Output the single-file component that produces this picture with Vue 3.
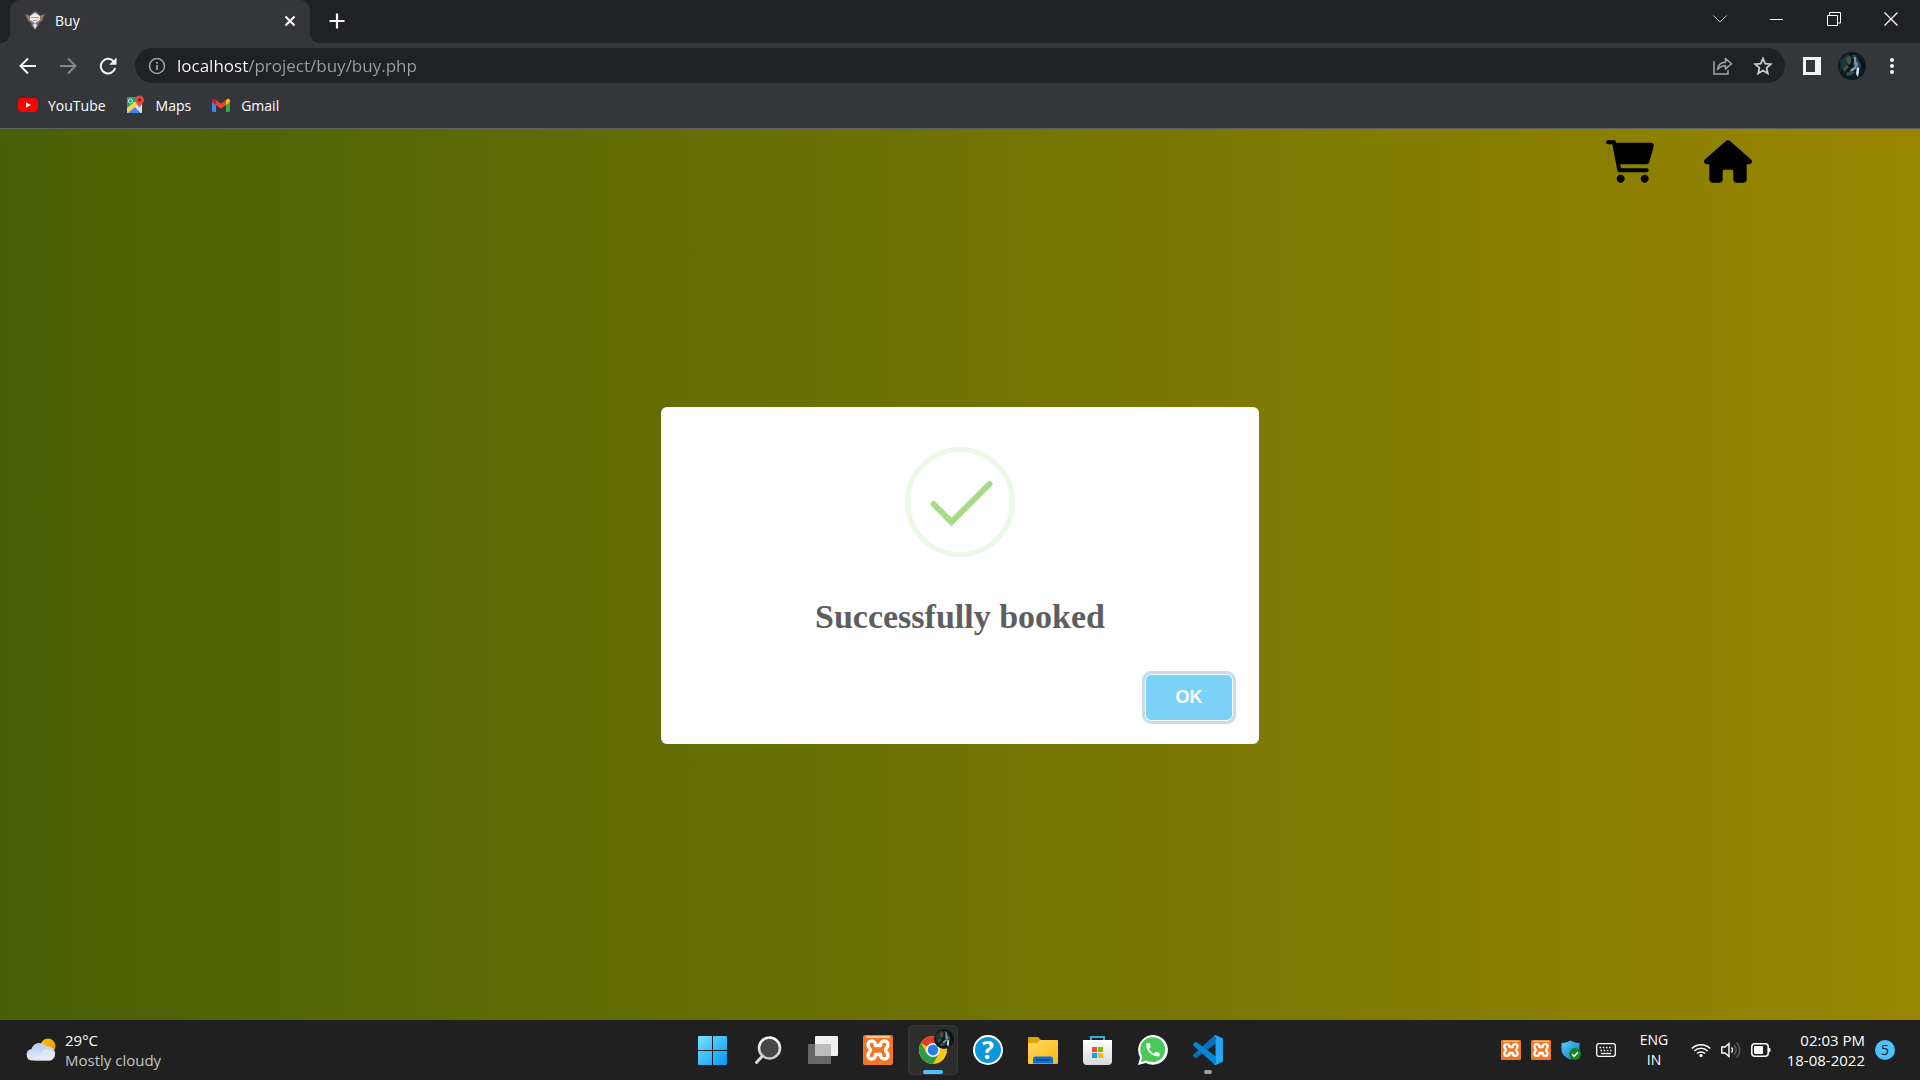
<script setup>
import { ref } from 'vue'

const address = ref('localhost/project/buy/buy.php')
const dialogOpen = ref(true)
</script>

<template>
  <div class="screen">
    <svg class="defs" aria-hidden="true">
      <defs>
        <linearGradient id="winBlue" x1="0" y1="0" x2="1" y2="1">
          <stop offset="0" stop-color="#7fe0ff" />
          <stop offset="0.5" stop-color="#3cbcf8" />
          <stop offset="1" stop-color="#0a94f5" />
        </linearGradient>
        <linearGradient id="folderYellow" x1="0" y1="0" x2="1" y2="1">
          <stop offset="0" stop-color="#ffd968" />
          <stop offset="1" stop-color="#f9b80e" />
        </linearGradient>
        <linearGradient id="paper" x1="0" y1="0" x2="0" y2="1">
          <stop offset="0" stop-color="#ffffff" />
          <stop offset="1" stop-color="#d9d9d9" />
        </linearGradient>
        <linearGradient id="cloud" x1="0" y1="0" x2="0" y2="1">
          <stop offset="0" stop-color="#b4cbef" />
          <stop offset="1" stop-color="#e8eef8" />
        </linearGradient>
        <linearGradient id="sun" x1="0" y1="0" x2="1" y2="1">
          <stop offset="0" stop-color="#ffc400" />
          <stop offset="1" stop-color="#f98a00" />
        </linearGradient>
        <linearGradient id="shieldBlue" x1="0" y1="0" x2="1" y2="1">
          <stop offset="0" stop-color="#5bd0f5" />
          <stop offset="1" stop-color="#0f72cc" />
        </linearGradient>
        <linearGradient id="rim" x1="0" y1="0" x2="0" y2="1">
          <stop offset="0" stop-color="#ffffff" />
          <stop offset="1" stop-color="#c4cad0" />
        </linearGradient>
        <symbol id="xampp" viewBox="0 0 30 30">
          <rect width="30" height="30" rx="2" fill="#f37623" />
          <rect x="3" y="1" width="24" height="2" rx="1" fill="#ffc59a" />
          <path
            d="M12.500 10.500C13 5 5 4.500 5 9.500C5 13 7.500 13 7.500 15C7.500 17 5 17 5 20.500C5 25.500 13 25 12.500 19.500H17.500C17 25 25 25.500 25 20.500C25 17 22.500 17 22.500 15C22.500 13 25 13 25 9.500C25 4.500 17 5 17.500 10.500Z"
            fill="none" stroke="#fff" stroke-width="3.400" stroke-linejoin="round"
          />
        </symbol>
        <symbol id="portrait" viewBox="0 0 28 28">
          <clipPath id="round"><circle cx="14" cy="14" r="14" /></clipPath>
          <g clip-path="url(#round)">
            <rect width="28" height="28" fill="#0d1a20" />
            <path d="M2 8L10 2L15 6L9 13L3 18z" fill="#1a3535" />
            <path d="M8 6l4-2 1 3-4 4zM5 16l4-3 2 2-5 5zM10 9l3-1 0 3-3 2z" fill="#46553f" />
            <path d="M14 3l4 0 2 5 3 4-1 6-4 0-3-5 1-5z" fill="#29465f" />
            <path d="M16 5l2 0 0 4 2 3-1 3-2-1-1-4z" fill="#7e97a8" />
            <path d="M19 15l2 1 0 4-1 5-2-3z" fill="#d7e3ea" />
            <path d="M13 17l5-3 0 2-3 3-4 2z" fill="#8ba2ae" />
            <path d="M8 21l5-2 4 1-3 3-5 1z" fill="#2f4b55" />
            <path d="M21 5l5 5 1 8-3-2z" fill="#101012" />
          </g>
        </symbol>
      </defs>
    </svg>

    <header class="browser">
      <div class="tab-strip">
        <div class="tab">
          <svg class="favicon" width="20" height="20" viewBox="0 0 20 20">
            <path d="M0 3l6 2-1 3 2 4-4-2-1-3z" fill="#9c7560" />
            <path d="M20 3l-6 2 1 3-2 4 4-2 1-3z" fill="#9c7560" />
            <path d="M10 0l4 3 1 6-2 6-3 4-3-4-2-6 1-6z" fill="#7b7480" />
            <path d="M5 5l5-3 5 3v4l-5 3-5-3z" fill="#f2eeee" />
            <path d="M10 12l2 2-2 4-2-4z" fill="#e6dfe4" />
            <path d="M6 6.500h8M8 9.500h4" stroke="#999" fill="none" />
          </svg>
          <span class="tab-title">Buy</span>
          <button class="plain close-tab" aria-label="Close tab">
            <svg width="12" height="12" viewBox="0 0 12 12"><path d="M1.500 1.500l9 9M10.500 1.500l-9 9" stroke="#fff" stroke-width="2" /></svg>
          </button>
        </div>
        <button class="plain new-tab" aria-label="New tab">
          <svg width="16" height="16" viewBox="0 0 16 16"><path d="M8 0.500v15M0.500 8h15" stroke="#fff" stroke-width="2.200" /></svg>
        </button>
        <div class="window-controls">
          <button class="plain" aria-label="Search tabs">
            <svg width="14" height="14" viewBox="0 0 14 14"><path d="M0.500 3.500l6.500 6.500 6.500-6.500" fill="none" stroke="#ccc" /></svg>
          </button>
          <button class="plain" aria-label="Minimize">
            <svg width="14" height="14" viewBox="0 0 14 14"><path d="M0 7.500h13" stroke="#fff" /></svg>
          </button>
          <button class="plain" aria-label="Restore">
            <svg width="14" height="14" viewBox="0 0 14 14"><path d="M0.500 3.500h10v10h-10zM2.500 3v-2.500h11v10.500h-2.500" fill="none" stroke="#fff" /></svg>
          </button>
          <button class="plain" aria-label="Close">
            <svg width="14" height="14" viewBox="0 0 14 14"><path d="M0.500 0.500l13 13M13.500 0.500l-13 13" stroke="#fff" stroke-width="1.200" /></svg>
          </button>
        </div>
      </div>

      <div class="toolbar">
        <button class="plain tool" aria-label="Back">
          <svg width="18" height="18" viewBox="0 0 18 18"><path d="M17 9H2M9 1.500L1.500 9L9 16.500" fill="none" stroke="#f1f3f4" stroke-width="2" /></svg>
        </button>
        <button class="plain tool" aria-label="Forward">
          <svg width="18" height="18" viewBox="0 0 18 18"><path d="M1 9H16M9 1.500L16.500 9L9 16.500" fill="none" stroke="#85878a" stroke-width="2" /></svg>
        </button>
        <button class="plain tool" aria-label="Reload">
          <svg width="18" height="18" viewBox="0 0 18 18">
            <path d="M14.500 4.200A7.300 7.300 0 1 0 16.200 11" fill="none" stroke="#f1f3f4" stroke-width="2" />
            <path d="M17.500 0.500V7.800H10.200z" fill="#f1f3f4" />
          </svg>
        </button>
        <div class="omnibox">
          <svg width="18" height="18" viewBox="0 0 18 18">
            <circle cx="9" cy="9" r="7.500" fill="none" stroke="#9aa0a6" stroke-width="1.600" />
            <path d="M9 8v5M9 5v1.800" stroke="#9aa0a6" stroke-width="1.800" />
          </svg>
          <input v-model="address" class="address" type="text" aria-label="Address" spellcheck="false" />
          <button class="plain tool" aria-label="Share">
            <svg width="20" height="18" viewBox="0 0 20 18">
              <path d="M1 4V17H15V13" fill="none" stroke="#a3a5a8" stroke-width="1.500" />
              <path d="M4.500 12.500C5 8 8 5.500 12.500 5.300V1.500L18.500 6.800L12.500 12V8.800C9 8.800 6.500 10 4.500 12.500z" fill="none" stroke="#a3a5a8" stroke-width="1.500" stroke-linejoin="round" />
            </svg>
          </button>
          <button class="plain tool" aria-label="Bookmark this page">
            <svg width="20" height="20" viewBox="0 0 20 20"><path d="M10 2.500l2.200 5.200 5.600.500-4.200 3.700 1.200 5.500-4.800-2.900-4.800 2.900 1.200-5.500L2.200 8.200l5.600-.500z" fill="none" stroke="#c9cbcd" stroke-width="1.800" /></svg>
          </button>
        </div>
        <div class="toolbar-end">
          <button class="plain tool" aria-label="Side panel">
            <svg width="18" height="18" viewBox="0 0 18 18"><path fill-rule="evenodd" d="M0 0h18v18H0zM3 3v12h9V3z" fill="#f1f3f4" /></svg>
          </button>
          <button class="plain tool" aria-label="Profile">
            <svg width="28" height="28"><use href="#portrait" /></svg>
          </button>
          <button class="plain tool" aria-label="Menu">
            <svg width="4" height="16" viewBox="0 0 4 16"><circle cx="2" cy="2" r="2" fill="#f1f3f4" /><circle cx="2" cy="8" r="2" fill="#f1f3f4" /><circle cx="2" cy="14" r="2" fill="#f1f3f4" /></svg>
          </button>
        </div>
      </div>

      <nav class="bookmarks" aria-label="Bookmarks">
        <a href="#youtube">
          <svg width="20" height="20" viewBox="0 0 20 20"><rect y="3" width="20" height="14" rx="4" fill="#f00" /><path d="M8 7.200v5.600L13 10z" fill="#fff" /></svg>
          YouTube
        </a>
        <a href="#maps">
          <svg width="20" height="20" viewBox="0 0 20 20">
            <path d="M1 2h12l3 8v8H1z" fill="#e8e8e8" />
            <path d="M1 2h11v5L1 16z" fill="#1fa463" />
            <path d="M1 13L12 4l2 3L2 18H1z" fill="#fdd045" />
            <path d="M2 18l7-6 6 6z" fill="#4285f4" />
            <path d="M9 12l4-4 3 5v5h-1z" fill="#dcdcdc" />
            <circle cx="4.500" cy="6" r="2" fill="none" stroke="#d7f2e3" />
            <path d="M13.500 0.500a4.500 4.500 0 0 1 4.500 4.500c0 3-3.500 4.500-4.500 8-1-3.500-4.500-5-4.500-8a4.500 4.500 0 0 1 4.500-4.500z" fill="#dd4b3e" />
            <circle cx="13.500" cy="4.800" r="1.600" fill="#7c2019" />
          </svg>
          Maps
        </a>
        <a href="#gmail">
          <svg width="20" height="20" viewBox="-1 0 20 20">
            <path d="M0 6l4 3v8H1.200A1.200 1.200 0 0 1 0 15.800z" fill="#4285f4" />
            <path d="M18 6l-4 3v8h2.800a1.200 1.200 0 0 0 1.200-1.200z" fill="#34a853" />
            <path d="M14 5l1.200-1A1.800 1.800 0 0 1 18 5.500V7l-4 3z" fill="#fbbc04" />
            <path d="M0 7V5.500A1.800 1.800 0 0 1 2.800 4L4 5v5z" fill="#c5221f" />
            <path d="M4 5l5 3.800L14 5v5l-5 3.800L4 10z" fill="#ea4335" />
          </svg>
          Gmail
        </a>
      </nav>
    </header>

    <main class="page">
      <nav class="page-nav" aria-label="Shop">
        <a href="#cart" aria-label="Cart">
          <svg width="48" height="43" viewBox="0 0 576 512"><path d="M96 0C107.500 0 117.400 8.190 119.600 19.510L121.100 32H541.800C562.100 32 578.300 52.250 572.600 72.660L518.600 264.700C514.700 278.500 502.100 288 487.800 288H170.700L179.900 336H488C501.300 336 512 346.700 512 360C512 373.300 501.300 384 488 384H159.100C148.500 384 138.600 375.800 136.400 364.500L76.140 48H24C10.750 48 0 37.250 0 24C0 10.750 10.750 0 24 0H96zM128 464C128 437.500 149.500 416 176 416C202.500 416 224 437.500 224 464C224 490.500 202.500 512 176 512C149.500 512 128 490.500 128 464zM512 464C512 490.500 490.500 512 464 512C437.500 512 416 490.500 416 464C416 437.500 437.500 416 464 416C490.500 416 512 437.500 512 464z" /></svg>
        </a>
        <a href="#home" aria-label="Home">
          <svg width="48" height="43" viewBox="0 0 576 512"><path d="M575.800 255.500C575.800 273.500 560.800 287.600 543.800 287.600H511.800L512.500 447.700C512.500 450.500 512.300 453.100 512 455.800V472C512 494.100 494.100 512 472 512H392C369.900 512 352 494.100 352 472V384C352 366.300 346 356 338 356H238C230 356 224 366.300 224 384V472C224 494.100 206.100 512 184 512H104C81.910 512 64 494.100 64 472V287.600H32.050C14.020 287.600 0 273.500 0 255.500C0 246.500 3.004 238.500 10.010 231.500L266.400 8.016C273.400 1.002 281.400 0 288.400 0C295.400 0 303.400 2.004 309.500 7.014L564.800 231.500C572.800 238.500 576.900 246.500 575.800 255.500z" /></svg>
        </a>
      </nav>

      <section v-if="dialogOpen" class="dialog" role="dialog" aria-labelledby="dialog-title">
        <svg class="success" width="110" height="110" viewBox="0 0 110 110">
          <circle cx="55" cy="55" r="52.500" fill="none" stroke="#edf8e7" stroke-width="5" />
          <path d="M28.500 57L46.500 75L84.500 37" fill="none" stroke="#a5dc86" stroke-width="6" stroke-linecap="round" />
        </svg>
        <h1 id="dialog-title">Successfully booked</h1>
        <div class="dialog-footer">
          <button class="ok" @click="dialogOpen = false">OK</button>
        </div>
      </section>
    </main>

    <footer class="taskbar">
      <div class="weather">
        <svg width="30" height="24" viewBox="0 0 30 24">
          <circle cx="22" cy="8" r="7.500" fill="url(#sun)" />
          <path d="M6 22.500a5.800 5.800 0 0 1-.500-11.500A8.500 8.500 0 0 1 20.500 8.500A6.500 6.500 0 0 1 23.500 22.500z" fill="url(#cloud)" />
          <path d="M8 22.500h15.500a5 5 0 0 0 0-10.500c-5-1.500-8 2-9 4z" fill="#e4ebf7" opacity="0.700" />
        </svg>
        <div>
          <div class="temp">29°C</div>
          <div class="sky">Mostly cloudy</div>
        </div>
      </div>

      <nav class="apps" aria-label="Pinned apps">
        <button class="plain app" aria-label="Start">
          <svg viewBox="0 0 50 50"><path d="M11 11h13v14h-14v-13q0-1 1-1zM25 11h13q1 0 1 1v13h-14zM10 26h14v14h-13q-1 0-1-1zM25 26h14v13q0 1-1 1h-13z" fill="url(#winBlue)" /></svg>
        </button>
        <button class="plain app" aria-label="Search">
          <svg viewBox="0 0 50 50">
            <path d="M19 31.500L13.500 37.500" stroke="#d4d8dc" stroke-width="3" stroke-linecap="round" />
            <circle cx="26.500" cy="23" r="10.500" fill="#474747" stroke="url(#rim)" stroke-width="2.500" />
          </svg>
        </button>
        <button class="plain app" aria-label="Task view">
          <svg viewBox="0 0 50 50">
            <rect x="10" y="19" width="23" height="20" rx="1" fill="#676767" />
            <rect x="17" y="11" width="23" height="20" rx="1" fill="#f0f0f0" />
            <path d="M17 19h16v12H17z" fill="#bdbdbd" />
          </svg>
        </button>
        <button class="plain app" aria-label="XAMPP">
          <svg viewBox="0 0 50 50"><use href="#xampp" x="10" y="10" width="30" height="30" /></svg>
        </button>
        <button class="plain app active" aria-label="Chrome">
          <svg viewBox="0 0 50 50">
            <circle cx="25" cy="25" r="14" fill="#fcc31e" />
            <path d="M25 25L12.880 18A14 14 0 0 1 37.120 18z" fill="#e33b2e" />
            <path d="M12.880 18A14 14 0 0 0 25 39L31 28.500L19 28.500z" fill="#2a9e47" />
            <circle cx="25" cy="25" r="7" fill="#fff" />
            <circle cx="25" cy="25" r="5.400" fill="#2b7de9" />
            <use href="#portrait" x="26" y="4" width="20" height="20" />
            <rect x="15" y="45" width="20" height="4" rx="2" fill="#4cc2ff" />
          </svg>
        </button>
        <button class="plain app" aria-label="Help">
          <svg viewBox="0 0 50 50">
            <circle cx="25" cy="25" r="14" fill="#0a97dc" stroke="#fff" stroke-width="2" />
            <text x="25" y="34" class="help-mark" text-anchor="middle">?</text>
          </svg>
        </button>
        <button class="plain app" aria-label="File Explorer">
          <svg viewBox="0 0 50 50">
            <path d="M10 13q0-1 1-1h9l3 3h-1v6H10z" fill="#e3a008" />
            <path d="M10 18h9l3-3h17q1 0 1 1v22q0 1-1 1H11q-1 0-1-1z" fill="url(#folderYellow)" />
            <path d="M15 38.500v-5q0-2 2-2h16q2 0 2 2v5z" fill="#0f6fd0" />
            <path d="M18 35h14" stroke="#07427f" stroke-width="1.200" />
          </svg>
        </button>
        <button class="plain app" aria-label="Microsoft Store">
          <svg viewBox="0 0 50 50">
            <path d="M18 17v-5h13v5" fill="none" stroke="#27b0ee" stroke-width="2" />
            <path d="M10 15h29v21q0 4-4 4H14q-4 0-4-4z" fill="url(#paper)" />
            <path d="M19 22h5v5h-5z" fill="#f25022" /><path d="M25 22h5v5h-5z" fill="#7fba00" />
            <path d="M19 28h5v5h-5z" fill="#00a4ef" /><path d="M25 28h5v5h-5z" fill="#ffb900" />
          </svg>
        </button>
        <button class="plain app" aria-label="WhatsApp">
          <svg viewBox="0 0 50 50">
            <path d="M10 40l2.100-7.600A14.900 14.900 0 1 1 17.800 38z" fill="#fff" />
            <path d="M12.800 37.200l1.700-5.300A12.500 12.500 0 1 1 18.500 35.500z" fill="#4ac959" />
            <path transform="translate(16 16) scale(0.740)" d="M6.620 10.790c1.440 2.830 3.760 5.140 6.590 6.590l2.200-2.200c.270-.270.670-.360 1.020-.240 1.120.370 2.330.570 3.570.570.550 0 1 .450 1 1V20c0 .550-.450 1-1 1-9.390 0-17-7.610-17-17 0-.550.450-1 1-1h3.500c.550 0 1 .450 1 1 0 1.250.200 2.450.570 3.570.110.350.030.740-.250 1.020l-2.200 2.200z" fill="#fff" />
          </svg>
        </button>
        <button class="plain app" aria-label="Visual Studio Code">
          <svg viewBox="0 0 50 50">
            <path d="M32 10L10.300 29.500q-.700 1 0 1.800l1.600 1.400q.900.600 1.800 0L33 18.500z" fill="#0a6fb8" />
            <path d="M10.300 20.500q-.700-1 0-1.800l1.600-1.400q.900-.600 1.800 0L33 31.500L32 40z" fill="#0a85d1" />
            <path d="M32 10.200q.600-.300 1.200 0l6 2.800q.800.400.800 1.300v21.400q0 .900-.800 1.300l-6 2.800q-.600.300-1.200 0l-1.500-1q2 .500 2-1.500V12.700q0-2-2-1.500z" fill="#27a4f2" />
            <rect x="21" y="45" width="8" height="4" rx="2" fill="#9a9a9a" />
          </svg>
        </button>
      </nav>

      <div class="tray">
        <button class="plain tray-item" aria-label="XAMPP Apache"><svg width="20" height="20"><use href="#xampp" /></svg></button>
        <button class="plain tray-item" aria-label="XAMPP MySQL"><svg width="20" height="20"><use href="#xampp" /></svg></button>
        <button class="plain tray-item" aria-label="Windows Security">
          <svg width="20" height="20" viewBox="0 0 20 20">
            <path d="M9.500 0.500C12 2 15 3 18.500 3V9C18.500 14 15 17.500 9.500 19.500C4 17.500 0.500 14 0.500 9V3C4 3 7 2 9.500 0.500z" fill="url(#shieldBlue)" />
            <circle cx="14" cy="14" r="6" fill="#0f8a1d" />
            <path d="M11.200 14.200l2 2 3.600-3.800" fill="none" stroke="#fff" stroke-width="1.600" />
          </svg>
        </button>
        <button class="plain tray-item keyboard" aria-label="Touch keyboard">
          <svg width="20" height="14" viewBox="0 0 20 14">
            <rect x="0.700" y="0.700" width="18.600" height="12.600" rx="2" fill="none" stroke="#fff" stroke-width="1.300" />
            <path d="M3.500 4.500h13M4.500 7.500h11" stroke="#fff" stroke-width="1.500" stroke-dasharray="1.500 1.700" />
            <path d="M5 10.500h10" stroke="#fff" stroke-width="1.300" />
          </svg>
        </button>
        <button class="plain language">ENG<br />IN</button>
        <button class="plain tray-item" aria-label="Network">
          <svg width="20" height="16" viewBox="0 0 20 16" fill="none" stroke="#fff" stroke-width="1.500">
            <path d="M0.800 6.500a13 13 0 0 1 18.400 0M3.400 9a9.500 9.500 0 0 1 13.200 0M6 11.500a5.800 5.800 0 0 1 8 0" />
            <circle cx="10" cy="13.500" r="1.600" fill="#fff" stroke="none" />
          </svg>
        </button>
        <button class="plain tray-item" aria-label="Volume">
          <svg width="20" height="18" viewBox="0 0 20 18" fill="none" stroke="#fff" stroke-width="1.400">
            <path d="M0.800 6H4L8 2.500V15.500L4 12H0.800z" />
            <path d="M10.500 6.500a3.500 3.500 0 0 1 0 5" />
            <path d="M13 4a7 7 0 0 1 0 10M15.500 1.500a10.500 10.500 0 0 1 0 15" stroke="#5c5c5c" />
          </svg>
        </button>
        <button class="plain tray-item" aria-label="Battery">
          <svg width="20" height="14" viewBox="0 0 20 14">
            <rect x="0.800" y="0.800" width="16.400" height="12.400" rx="3" fill="none" stroke="#fff" stroke-width="1.500" />
            <rect x="3" y="3" width="9" height="8" rx="1" fill="#fff" />
            <path d="M17.500 5h1q1 0 1 1v2q0 1-1 1h-1z" fill="#fff" />
          </svg>
        </button>
        <time class="clock" datetime="2022-08-18T14:03">02:03 PM<br />18-08-2022</time>
        <button class="plain badge" aria-label="5 notifications">5</button>
      </div>
    </footer>
  </div>
</template>

<style>
body {
  margin: 0;
}
</style>

<style scoped>
.screen {
  display: flex;
  flex-direction: column;
  min-height: 100vh;
  font-family: "Open Sans", "Noto Sans", sans-serif;
  font-size: 14px;
  color: #fff;
}
.defs {
  position: absolute;
  width: 0;
  height: 0;
}
svg {
  display: block;
  flex: none;
}
.plain {
  display: flex;
  align-items: center;
  justify-content: center;
  padding: 0;
  border: 0;
  background: none;
  color: inherit;
  font: inherit;
}
.browser {
  background: #35363a;
  border-bottom: 1px solid #5f6064;
}
.tab-strip {
  display: flex;
  height: 43px;
  padding: 0 1px 0 10px;
  background: #202124;
}
.tab {
  position: relative;
  display: flex;
  align-items: center;
  box-sizing: border-box;
  width: 300px;
  padding: 0 14px 2px 15px;
  border-radius: 10px 10px 0 0;
  background: #35363a;
}
.tab::before,
.tab::after {
  content: "";
  position: absolute;
  bottom: 0;
  width: 10px;
  height: 10px;
}
.tab::before {
  right: 100%;
  background: radial-gradient(circle at 0 0, #202124 10px, #35363a 10px);
}
.tab::after {
  left: 100%;
  background: radial-gradient(circle at 100% 0, #202124 10px, #35363a 10px);
}
.favicon {
  margin-right: 10px;
}
.close-tab {
  margin-left: auto;
}
.new-tab {
  width: 36px;
  height: 42px;
  margin-left: 9px;
}
.window-controls {
  display: flex;
  height: 37px;
  margin-left: auto;
}
.window-controls .plain {
  width: 57px;
}
.toolbar {
  display: flex;
  align-items: center;
  height: 45px;
  padding: 0 8px;
}
.tool {
  width: 40px;
  height: 35px;
}
.omnibox {
  display: flex;
  flex: 1;
  align-items: center;
  height: 35px;
  margin-left: 7px;
  padding: 0 2px 0 13px;
  border-radius: 18px;
  background: #202124;
}
.address {
  flex: 1;
  min-width: 0;
  height: 30px;
  margin-left: 11px;
  padding: 0;
  border: 0;
  outline: 0;
  font-family: inherit;
  font-size: 17px;
  color: transparent;
  caret-color: #fff;
  background: linear-gradient(to right, #fff 71px, #9aa0a6 71px);
  background-clip: text;
  -webkit-background-clip: text;
}
.toolbar-end {
  display: flex;
  margin-left: 7px;
}
.bookmarks {
  display: flex;
  gap: 20px;
  height: 34px;
  padding: 0 18px 6px;
}
.bookmarks a {
  display: flex;
  align-items: center;
  gap: 10px;
  color: #fff;
  text-decoration: none;
}
.page {
  display: grid;
  flex: 1;
  background: linear-gradient(to right, #476006, #998600);
}
.page-nav,
.dialog {
  grid-area: 1 / 1;
}
.page-nav {
  display: flex;
  align-self: start;
  justify-content: flex-end;
  gap: 50px;
  padding: 11px 168px 0 0;
}
.dialog {
  display: flex;
  flex-direction: column;
  align-items: center;
  place-self: center;
  box-sizing: border-box;
  width: 598px;
  margin-top: 2px;
  padding: 40px 23px 20px;
  border-radius: 6px;
  background: #fff;
}
.dialog h1 {
  margin: 38px 0 32px;
  font-family: "Liberation Serif", "Times New Roman", serif;
  font-size: 34px;
  line-height: 44px;
  color: #5e5e5e;
}
.dialog-footer {
  display: flex;
  justify-content: flex-end;
  width: 100%;
}
.ok {
  width: 94px;
  height: 53px;
  border: 3px solid #c9dcec;
  border-radius: 9px;
  background: #7cd1f9;
  box-shadow: inset 0 0 0 1px #fff;
  color: #fff;
  font-family: "Liberation Sans", Arial, sans-serif;
  font-size: 18px;
  font-weight: 700;
}
.taskbar {
  display: grid;
  grid-template-columns: 1fr auto 1fr;
  align-items: center;
  height: 60px;
  background: #202020;
}
.weather {
  display: flex;
  align-items: center;
  gap: 9px;
  padding-left: 26px;
  font-size: 15px;
  line-height: 20px;
}
.sky {
  color: #c4c4c4;
}
.apps {
  display: flex;
  gap: 5px;
  padding-left: 1px;
}
.app {
  box-sizing: border-box;
  width: 50px;
  height: 50px;
  border-radius: 5px;
}
.app svg {
  width: 50px;
  height: 50px;
}
.active {
  background: #2d2d2d;
  box-shadow: inset 0 0 0 1px #363636;
}
.help-mark {
  fill: #fff;
  font-family: "Open Sans", sans-serif;
  font-size: 25px;
  font-weight: 700;
}
.tray {
  display: flex;
  align-items: center;
  justify-content: flex-end;
  padding-right: 25px;
  line-height: 20px;
}
.tray-item {
  width: 30px;
  height: 40px;
}
.keyboard {
  margin-left: 5px;
}
.language {
  width: 48px;
  margin: 0 8px 0 9px;
}
.clock {
  width: 89px;
  font-size: 15px;
  text-align: right;
}
.badge {
  width: 20px;
  height: 20px;
  margin-left: 10px;
  border-radius: 50%;
  background: #4cc2ff;
  color: #101010;
}
</style>
